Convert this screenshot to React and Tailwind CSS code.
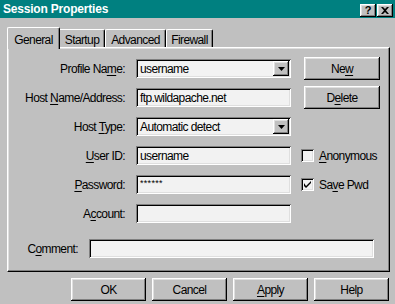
import React from 'react';

const raised = 'shadow-[inset_-1px_-1px_#000,inset_1px_1px_#fff,inset_-2px_-2px_#808080,inset_2px_2px_#dfdfdf]';
const sunken = 'shadow-[inset_1px_1px_#808080,inset_-1px_-1px_#fff,inset_2px_2px_#000,inset_-2px_-2px_#dfdfdf]';

const U = ({ children }) => <span className="underline underline-offset-[2px]">{children}</span>;

const Button = ({ children, className = '' }) => (
  <button type="button" className={`flex items-center justify-center bg-[#c0c0c0] text-black ${raised} ${className}`}>
    {children}
  </button>
);

const TextBox = ({ value, width = 'w-[155px]', small }) => (
  <div className={`h-[19px] ${width} bg-[#f2f2f2] ${sunken} flex items-center pl-[4px]`}>
    <span className={small ? 'text-[9px] tracking-[0.3px] leading-none mt-[-3px]' : ''}>{value}</span>
  </div>
);

const Combo = ({ value }) => (
  <div className={`h-[19px] w-[155px] bg-[#f2f2f2] ${sunken} flex items-center pl-[4px] pr-[2px]`}>
    <span className="flex-1">{value}</span>
    <div className={`w-[16px] h-[15px] flex items-center justify-center bg-[#c0c0c0] ${raised}`}>
      <svg width="7" height="4" viewBox="0 0 7 4"><path d="M0 0h7L3.5 4z" fill="#000" /></svg>
    </div>
  </div>
);

const Check = ({ checked, children }) => (
  <div className="flex items-center ml-[10px]">
    <div className={`w-[13px] h-[13px] bg-[#f2f2f2] ${sunken} flex items-center justify-center`}>
      {checked && (
        <svg width="7" height="7" viewBox="0 0 7 7">
          <path d="M0 2v3l2 2 5-5V0L2 5z" fill="#000" />
        </svg>
      )}
    </div>
    <span className="ml-[5px]">{children}</span>
  </div>
);

const Row = ({ label, children }) => (
  <div className="flex items-center h-[19px]">
    <div className="w-[117px] text-right">{label}</div>
    <div className="ml-[11px] flex items-center">{children}</div>
  </div>
);

export default function App() {
  return (
    <div
      className="w-[395px] h-[304px] bg-[#c0c0c0] text-black text-[12px] tracking-[-0.6px] overflow-hidden flex flex-col"
      style={{ fontFamily: '"Liberation Sans", Arial, sans-serif' }}
    >
      {/* title bar */}
      <div className="h-[18px] bg-[#008080] flex items-center pl-[3px] pr-[2px]">
        <span className="flex-1 text-white font-bold text-[12px] tracking-[-0.2px]">Session Properties</span>
        <div className="flex mt-[3px]">
          <div className={`w-[16px] h-[13px] bg-[#c0c0c0] ${raised} flex items-center justify-center font-bold text-[11px] leading-none tracking-normal`}>?</div>
          <div className={`ml-[1px] w-[16px] h-[13px] bg-[#c0c0c0] ${raised} flex items-center justify-center`}>
            <svg width="8" height="7" viewBox="0 0 8 7">
              <path d="M0 0h2l2 2 2-2h2L5 3.5 8 7H6L4 5 2 7H0l3-3.5z" fill="#000" />
            </svg>
          </div>
        </div>
      </div>

      {/* tabs */}
      <div className="mt-[9px] ml-[7px] flex items-end h-[20px] relative z-10">
        <div className="h-[22px] mb-[-2px] w-[53px] bg-[#c0c0c0] border-t border-l border-white border-r border-r-black rounded-t-[2px] shadow-[inset_-1px_0_#808080] flex items-start justify-center pt-[3px]">
          General
        </div>
        <div className="h-[18px] w-[45px] border-t border-white border-r border-r-black rounded-tr-[2px] shadow-[inset_-1px_0_#808080] flex items-start justify-center pt-[1px]">
          Startup
        </div>
        <div className="h-[18px] w-[61px] border-t border-l border-white border-r border-r-black rounded-t-[2px] shadow-[inset_-1px_0_#808080] flex items-start justify-center pt-[1px]">
          Advanced
        </div>
        <div className="h-[18px] w-[47px] border-t border-l border-white border-r border-r-black rounded-t-[2px] shadow-[inset_-1px_0_#808080] flex items-start justify-center pt-[1px]">
          Firewall
        </div>
      </div>

      {/* panel */}
      <div className="ml-[7px] w-[383px] h-[225px] border border-t-white border-l-white border-r-black border-b-black shadow-[inset_-1px_-1px_#808080,inset_1px_1px_#dfdfdf] pt-[11px] flex flex-col">
        <div className="flex flex-col gap-[10px]">
          <Row label={<>Profile Na<U>m</U>e:</>}>
            <Combo value="username" />
            <Button className="ml-[13px] w-[76px] h-[23px]">Ne<U>w</U></Button>
          </Row>
          <Row label={<>Host <U>N</U>ame/Address:</>}>
            <TextBox value="ftp.wildapache.net" />
            <Button className="ml-[13px] w-[76px] h-[23px]">D<U>e</U>lete</Button>
          </Row>
          <Row label={<>Host <U>T</U>ype:</>}>
            <Combo value="Automatic detect" />
          </Row>
          <Row label={<><U>U</U>ser ID:</>}>
            <TextBox value="username" />
            <Check><U>A</U>nonymous</Check>
          </Row>
          <Row label={<><U>P</U>assword:</>}>
            <TextBox value="******" small />
            <Check checked>Sa<U>v</U>e Pwd</Check>
          </Row>
          <Row label={<>A<U>c</U>count:</>}>
            <TextBox value="" />
          </Row>
        </div>
        <div className="flex items-center h-[19px] mt-[16px]">
          <div className="w-[70px] text-right">C<U>o</U>mment:</div>
          <div className="ml-[11px]">
            <TextBox value="" width="w-[285px]" />
          </div>
        </div>
      </div>

      {/* bottom buttons */}
      <div className="mt-[6px] flex justify-end gap-[6px] pr-[6px]">
        <Button className="w-[75px] h-[23px]">OK</Button>
        <Button className="w-[75px] h-[23px]">Cancel</Button>
        <Button className="w-[75px] h-[23px]"><U>A</U>pply</Button>
        <Button className="w-[75px] h-[23px]">Help</Button>
      </div>
    </div>
  );
}
